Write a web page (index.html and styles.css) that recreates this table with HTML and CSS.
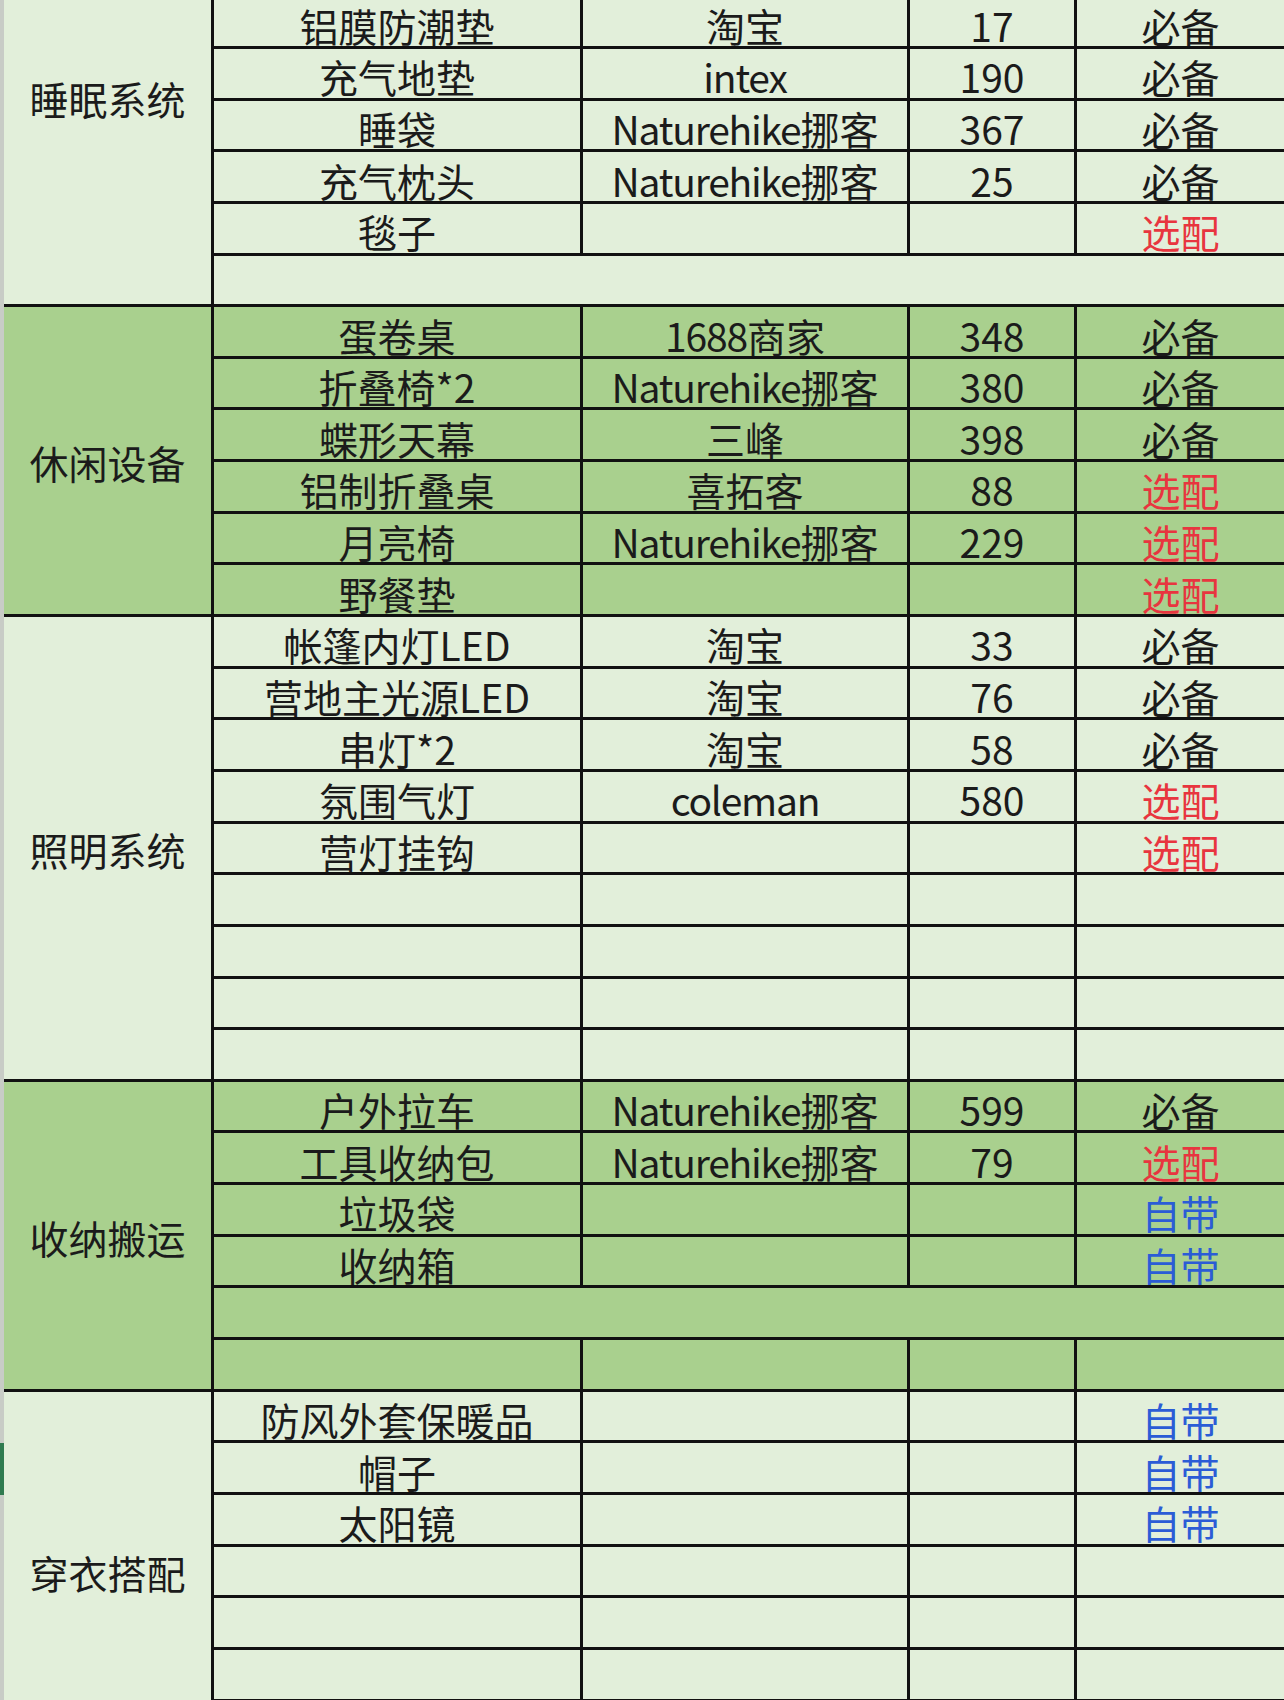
FILE: index.html
```html
<!DOCTYPE html>
<html lang="zh-CN">
<head>
<meta charset="utf-8">
<title>露营装备清单</title>
<link rel="stylesheet" href="styles.css">
</head>
<body>
<div class="page">
  <div class="strip">
    <div class="strip-gray top"></div>
    <div class="strip-sel"></div>
    <div class="strip-gray rest"></div>
  </div>
  <div class="sheet">
    <div class="sec light">
      <div class="cat span6 cat-first">睡眠系统</div>
      <div class="c first">铝膜防潮垫</div><div class="c first">淘宝</div><div class="c first">17</div><div class="c first last">必备</div>
      <div class="c">充气地垫</div><div class="c"><span class="lat">intex</span></div><div class="c">190</div><div class="c last">必备</div>
      <div class="c">睡袋</div><div class="c"><span class="lat">Naturehike</span>挪客</div><div class="c">367</div><div class="c last">必备</div>
      <div class="c">充气枕头</div><div class="c"><span class="lat">Naturehike</span>挪客</div><div class="c">25</div><div class="c last">必备</div>
      <div class="c">毯子</div><div class="c"></div><div class="c"></div><div class="c last red">选配</div>
      <div class="c merged"></div>
    </div>
    <div class="sec dark">
      <div class="cat span6">休闲设备</div>
      <div class="c">蛋卷桌</div><div class="c"><span class="lat">1688</span>商家</div><div class="c">348</div><div class="c last">必备</div>
      <div class="c">折叠椅*2</div><div class="c"><span class="lat">Naturehike</span>挪客</div><div class="c">380</div><div class="c last">必备</div>
      <div class="c">蝶形天幕</div><div class="c">三峰</div><div class="c">398</div><div class="c last">必备</div>
      <div class="c">铝制折叠桌</div><div class="c">喜拓客</div><div class="c">88</div><div class="c last red">选配</div>
      <div class="c">月亮椅</div><div class="c"><span class="lat">Naturehike</span>挪客</div><div class="c">229</div><div class="c last red">选配</div>
      <div class="c">野餐垫</div><div class="c"></div><div class="c"></div><div class="c last red">选配</div>
    </div>
    <div class="sec light">
      <div class="cat span9">照明系统</div>
      <div class="c">帐篷内灯LED</div><div class="c">淘宝</div><div class="c">33</div><div class="c last">必备</div>
      <div class="c">营地主光源LED</div><div class="c">淘宝</div><div class="c">76</div><div class="c last">必备</div>
      <div class="c">串灯*2</div><div class="c">淘宝</div><div class="c">58</div><div class="c last">必备</div>
      <div class="c">氛围气灯</div><div class="c"><span class="lat">coleman</span></div><div class="c">580</div><div class="c last red">选配</div>
      <div class="c">营灯挂钩</div><div class="c"></div><div class="c"></div><div class="c last red">选配</div>
      <div class="c"></div><div class="c"></div><div class="c"></div><div class="c last"></div>
      <div class="c"></div><div class="c"></div><div class="c"></div><div class="c last"></div>
      <div class="c"></div><div class="c"></div><div class="c"></div><div class="c last"></div>
      <div class="c"></div><div class="c"></div><div class="c"></div><div class="c last"></div>
    </div>
    <div class="sec dark">
      <div class="cat span6">收纳搬运</div>
      <div class="c">户外拉车</div><div class="c"><span class="lat">Naturehike</span>挪客</div><div class="c">599</div><div class="c last">必备</div>
      <div class="c">工具收纳包</div><div class="c"><span class="lat">Naturehike</span>挪客</div><div class="c">79</div><div class="c last red">选配</div>
      <div class="c">垃圾袋</div><div class="c"></div><div class="c"></div><div class="c last blue">自带</div>
      <div class="c">收纳箱</div><div class="c"></div><div class="c"></div><div class="c last blue">自带</div>
      <div class="c merged"></div>
      <div class="c"></div><div class="c"></div><div class="c"></div><div class="c last"></div>
    </div>
    <div class="sec light">
      <div class="cat span7">穿衣搭配</div>
      <div class="c">防风外套保暖品</div><div class="c"></div><div class="c"></div><div class="c last blue">自带</div>
      <div class="c">帽子</div><div class="c"></div><div class="c"></div><div class="c last blue">自带</div>
      <div class="c">太阳镜</div><div class="c"></div><div class="c"></div><div class="c last blue">自带</div>
      <div class="c"></div><div class="c"></div><div class="c"></div><div class="c last"></div>
      <div class="c"></div><div class="c"></div><div class="c"></div><div class="c last"></div>
      <div class="c"></div><div class="c"></div><div class="c"></div><div class="c last"></div>
      <div class="c"></div><div class="c"></div><div class="c"></div><div class="c last"></div>
    </div>
  </div>
</div>
</body>
</html>
```

FILE: styles.css
```css
html, body {
  margin: 0;
  padding: 0;
  background: #e2efda;
}

.page {
  display: flex;
  width: 1284px;
  height: 1700px;
  overflow: hidden;
  font-family: "Noto Sans CJK SC", "Noto Sans", sans-serif;
  color: #1b1b1b;
}

.strip {
  display: flex;
  flex-direction: column;
  width: 4px;
  flex: 0 0 4px;
}

.strip-gray {
  background: #c8ccc6;
}

.strip-gray.top {
  height: 1443px;
}

.strip-sel {
  height: 52px;
  background: #2f7b4f;
}

.strip-gray.rest {
  flex: 1;
}

.sheet {
  display: grid;
  grid-template-columns: 210px 369px 327px 167px 207px;
  grid-template-rows: 49px;
  grid-auto-rows: 51.65px;
  width: 1280px;
  align-content: start;
}

.sec {
  display: contents;
}

.c,
.cat {
  box-sizing: border-box;
  border-right: 3px solid #111;
  border-bottom: 3px solid #111;
  display: flex;
  align-items: center;
  justify-content: center;
  font-size: 39px;
  line-height: 1;
  white-space: nowrap;
}

.c {
  padding-top: 7px;
}

.c.first {
  padding-top: 5px;
}

.lat {
  letter-spacing: -1.2px;
}

.cat {
  grid-column: 1;
  padding-top: 4px;
}

.cat-first {
  align-items: flex-start;
  padding-top: 79px;
}

.span6 { grid-row: span 6; }
.span7 { grid-row: span 7; }
.span9 { grid-row: span 9; }

.c.last {
  border-right: 0;
}

.c.merged {
  grid-column: span 4;
  border-right: 0;
}

.light > .c,
.light > .cat {
  background: #e2efda;
}

.dark > .c,
.dark > .cat {
  background: #a9d08e;
}

.red {
  color: #e8353f;
}

.blue {
  color: #2b5cd6;
}
```
